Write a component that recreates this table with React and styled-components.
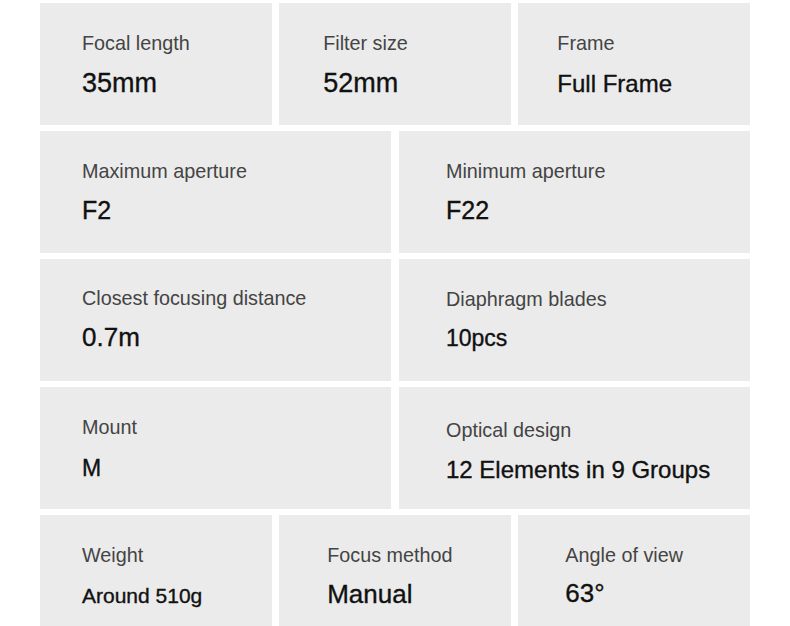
import React from "react";
import styled, { createGlobalStyle } from "styled-components";

const GlobalStyle = createGlobalStyle`
  html, body {
    margin: 0;
    padding: 0;
    background: #ffffff;
    overflow: hidden;
  }
  body {
    font-family: "Liberation Sans", Arial, sans-serif;
  }
`;

const Sheet = styled.div`
  width: 710px;
  margin-left: 40px;
  padding-top: 3px;
  display: flex;
  flex-direction: column;
  gap: 6px;
`;

const Row = styled.div`
  display: grid;
  grid-template-columns: repeat(${(p) => p.cols}, 1fr);
  column-gap: ${(p) => p.gap}px;
  height: 122px;
`;

const Cell = styled.div`
  min-width: 0;
  background: #ebebeb;
  box-sizing: border-box;
  padding-top: ${(p) => p.top - 4}px;
  padding-left: ${(p) => p.left}px;
  display: flex;
  flex-direction: column;
`;

const Label = styled.div`
  font-size: 19.8px;
  line-height: 22px;
  color: #444444;
  white-space: nowrap;
`;

const Value = styled.div`
  font-size: ${(p) => p.size}px;
  line-height: 1.15;
  color: #111111;
  white-space: nowrap;
  -webkit-text-stroke: 0.35px #111111;
  margin-top: ${(p) => p.base - 0.921 * p.size - p.top - 18}px;
`;

const rows = [
  {
    gap: 7.5,
    cells: [
      { label: "Focal length", value: "35mm", left: 42, top: 33, base: 89.5, size: 27 },
      { label: "Filter size", value: "52mm", left: 44, top: 33, base: 89.5, size: 27 },
      { label: "Frame", value: "Full Frame", left: 39, top: 33, base: 89, size: 24 },
    ],
  },
  {
    gap: 8,
    cells: [
      { label: "Maximum aperture", value: "F2", left: 42, top: 33, base: 88, size: 25 },
      { label: "Minimum aperture", value: "F22", left: 47, top: 33, base: 88, size: 25 },
    ],
  },
  {
    gap: 8,
    cells: [
      { label: "Closest focusing distance", value: "0.7m", left: 42, top: 32, base: 88, size: 26 },
      { label: "Diaphragm blades", value: "10pcs", left: 47, top: 33, base: 87, size: 23 },
    ],
  },
  {
    gap: 8,
    cells: [
      { label: "Mount", value: "M", left: 42, top: 33, base: 89, size: 23 },
      { label: "Optical design", value: "12 Elements in 9 Groups", left: 47, top: 36, base: 91, size: 24 },
    ],
  },
  {
    gap: 7.5,
    cells: [
      { label: "Weight", value: "Around 510g", left: 42, top: 33, base: 88.5, size: 21 },
      { label: "Focus method", value: "Manual", left: 48, top: 33, base: 88.5, size: 26 },
      { label: "Angle of view", value: "63°", left: 47, top: 33, base: 87.5, size: 26 },
    ],
  },
];

const App = () => {
  return (
    <>
      <GlobalStyle />
      <Sheet>
        {rows.map((row, i) => (
          <Row key={i} gap={row.gap} cols={row.cells.length}>
            {row.cells.map((cell) => (
              <Cell key={cell.label} top={cell.top} left={cell.left}>
                <Label>{cell.label}</Label>
                <Value size={cell.size} base={cell.base} top={cell.top}>
                  {cell.value}
                </Value>
              </Cell>
            ))}
          </Row>
        ))}
      </Sheet>
    </>
  );
};

export default App;
